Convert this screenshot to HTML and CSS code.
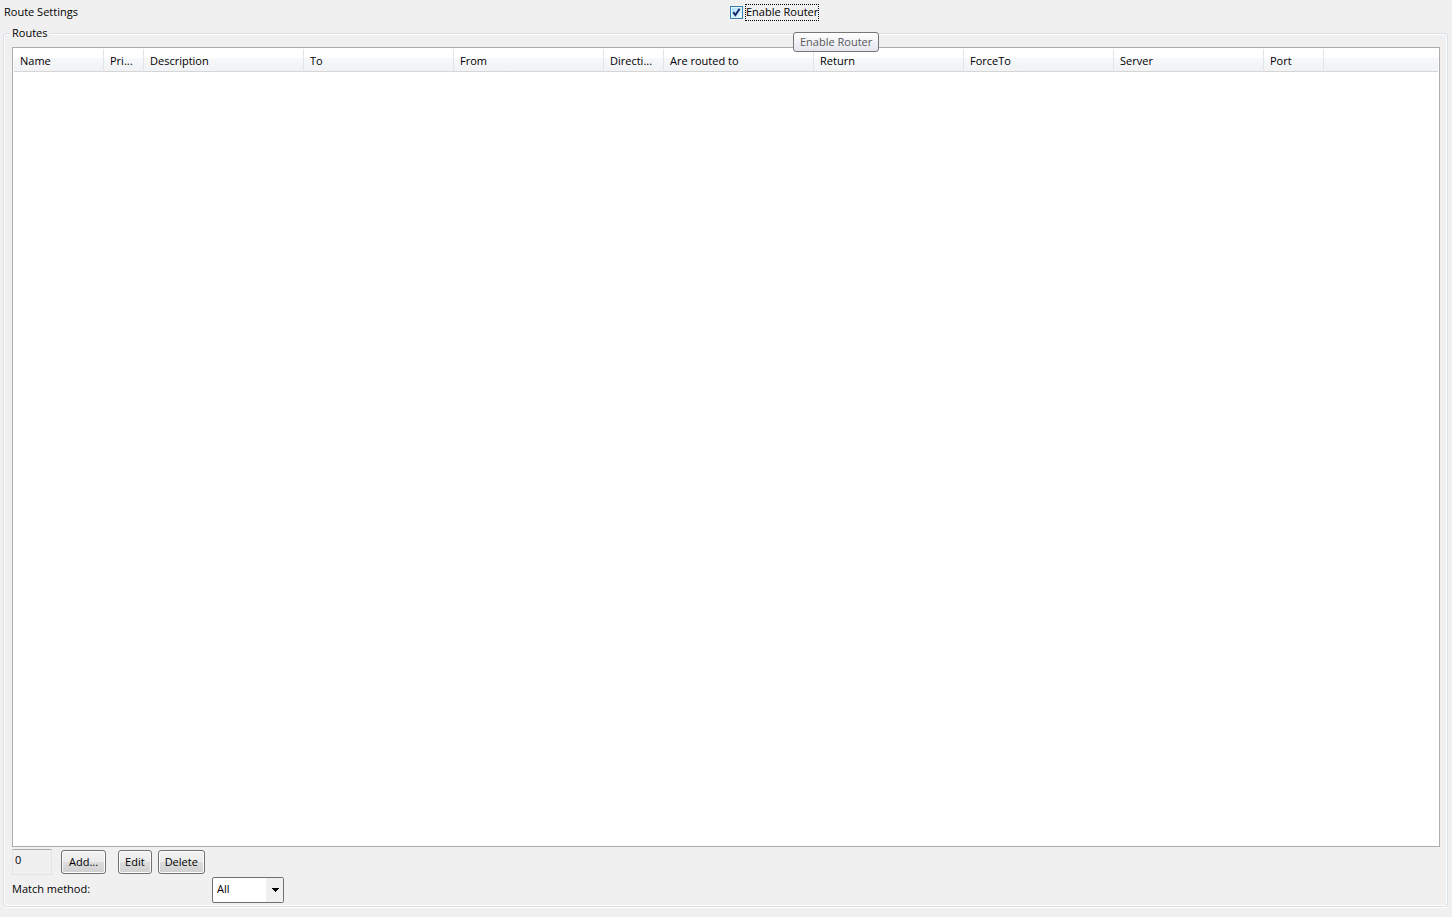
FILE: index.html
```
<!DOCTYPE html>
<html lang="en">
<head>
<meta charset="utf-8">
<title>Route Settings</title>
<link rel="stylesheet" href="styles.css">
</head>
<body>
<header class="topbar">
  <div class="title">Route Settings</div>
  <div class="enable">
    <input class="check" type="checkbox" id="enable-router" checked>
    <label class="check-label" for="enable-router">Enable Router</label>
    <div class="tooltip" role="tooltip">Enable Router</div>
  </div>
</header>
<fieldset class="group">
  <legend class="legend">Routes</legend>
  <div class="list">
    <table class="routes">
      <colgroup>
        <col class="w90"><col class="w40"><col class="w160"><col class="w150"><col class="w150"><col class="w60"><col class="w150"><col class="w150"><col class="w150"><col class="w150"><col class="w60"><col>
      </colgroup>
      <thead>
        <tr><th>Name</th><th>Pri...</th><th>Description</th><th>To</th><th>From</th><th>Directi...</th><th>Are routed to</th><th>Return</th><th>ForceTo</th><th>Server</th><th>Port</th><th></th></tr>
      </thead>
      <tbody></tbody>
    </table>
  </div>
  <div class="actions">
    <input class="count" type="text" value="0" aria-label="Route count" readonly>
    <button class="btn add" type="button">Add...</button>
    <button class="btn" type="button">Edit</button>
    <button class="btn" type="button">Delete</button>
  </div>
  <div class="match">
    <label class="match-label" for="match-method">Match method:</label>
    <div class="combo">
      <select class="select" id="match-method"><option>All</option></select>
      <span class="combo-arrow"><svg width="7" height="4" viewBox="0 0 7 4" shape-rendering="crispEdges"><path d="M0 0h7v1h-1v1h-1v1h-1v1h-1v-1h-1v-1h-1v-1h-1z"/></svg></span>
    </div>
  </div>
</fieldset>
</body>
</html>
```
FILE: styles.css
```
* { box-sizing: border-box; }

body {
  margin: 0;
  background: #f0f0f0;
  color: #000;
  font: 11px/16px "Open Sans", "Noto Sans", sans-serif;
}

.topbar {
  display: grid;
  grid-template-columns: 1fr 1fr;
  gap: 8px;
  height: 25px;
  padding: 4px;
}

.enable {
  position: relative;
  display: flex;
  align-items: center;
  gap: 2px;
}

.check {
  appearance: none;
  width: 13px;
  height: 13px;
  margin: 0;
  border: 1px solid #3c7fb1;
  background: url("data:image/svg+xml,%3Csvg xmlns='http://www.w3.org/2000/svg' viewBox='0 0 11 11'%3E%3Cpath d='M2.2 5.2 4.4 8 8.6 1.8' fill='none' stroke='%23122a6b' stroke-width='2'/%3E%3C/svg%3E") center / 11px 11px, linear-gradient(135deg, #a9def8, #eefaff);
  box-shadow: inset 0 0 0 1px #def9fa;
}

.check-label {
  height: 17px;
  outline: 1px dotted #000;
  outline-offset: -1px;
  padding: 0 1px;
}

.tooltip {
  position: absolute;
  left: 63px;
  top: 28px;
  z-index: 1;
  padding: 1px 6px;
  border: 1px solid #767676;
  border-radius: 3px;
  background: linear-gradient(#fff, #e4e5f0);
  color: #575757;
  white-space: nowrap;
}

.group {
  display: flex;
  flex-direction: column;
  height: calc(100vh - 35px);
  min-width: 0;
  margin: 0 4px 9px 3px;
  padding: 6px 7px 3px 8px;
  border: 1px solid #d5dfe5;
  border-radius: 3px;
  box-shadow: inset 0 0 0 1px #fff, 0 1px 0 #fff;
}

.legend {
  margin-left: -2px;
  padding: 0 2px;
  background: #f0f0f0;
}

.list {
  flex: 1;
  padding: 1px;
  border: 1px solid #abadb3;
  background: #fff;
  overflow: hidden;
}

.routes {
  width: 100%;
  table-layout: fixed;
  border-collapse: separate;
  border-spacing: 0;
}

.w40 { width: 40px; }
.w60 { width: 60px; }
.w90 { width: 90px; }
.w150 { width: 150px; }
.w160 { width: 160px; }

th {
  height: 23px;
  padding: 2px 6px 0;
  border-right: 1px solid #e3e4e6;
  border-bottom: 1px solid #d5d5d5;
  background: linear-gradient(#fff 40%, #f7f8fa 40%, #f1f2f4);
  font-weight: normal;
  text-align: left;
  white-space: nowrap;
}

th:last-child { border-right: 0; }

.actions {
  display: flex;
  gap: 6px;
  padding-top: 2px;
}

.count {
  width: 40px;
  height: 26px;
  margin-right: 3px;
  padding: 0 2px 5px;
  border: 1px solid #e3e3eb;
  border-top-color: #abadb3;
  background: #f0f0f0;
  color: inherit;
  font: inherit;
}

.btn {
  height: 24px;
  margin-top: 1px;
  padding: 0 6px;
  border: 1px solid #707070;
  border-radius: 3px;
  background: linear-gradient(#f2f2f2, #ebebeb 50%, #ddd 50%, #cfcfcf);
  box-shadow: inset 0 0 0 1px #fcfcfc;
  color: inherit;
  font: inherit;
}

.add {
  margin-right: 6px;
  padding: 0 7px;
}

.match {
  display: flex;
  padding-top: 2px;
}

.match-label {
  width: 200px;
  padding-top: 4px;
}

.combo {
  display: grid;
  width: 72px;
  height: 26px;
}

.select {
  grid-area: 1 / 1;
  appearance: none;
  padding: 0 4px 2px;
  border: 1px solid #707070;
  border-radius: 2px;
  background: #fff;
  color: inherit;
  font: inherit;
}

.combo-arrow {
  grid-area: 1 / 1;
  justify-self: end;
  display: flex;
  align-items: center;
  justify-content: center;
  width: 17px;
  margin: 1px;
  padding-left: 1px;
  background: #f0f0f0;
  pointer-events: none;
}
```
